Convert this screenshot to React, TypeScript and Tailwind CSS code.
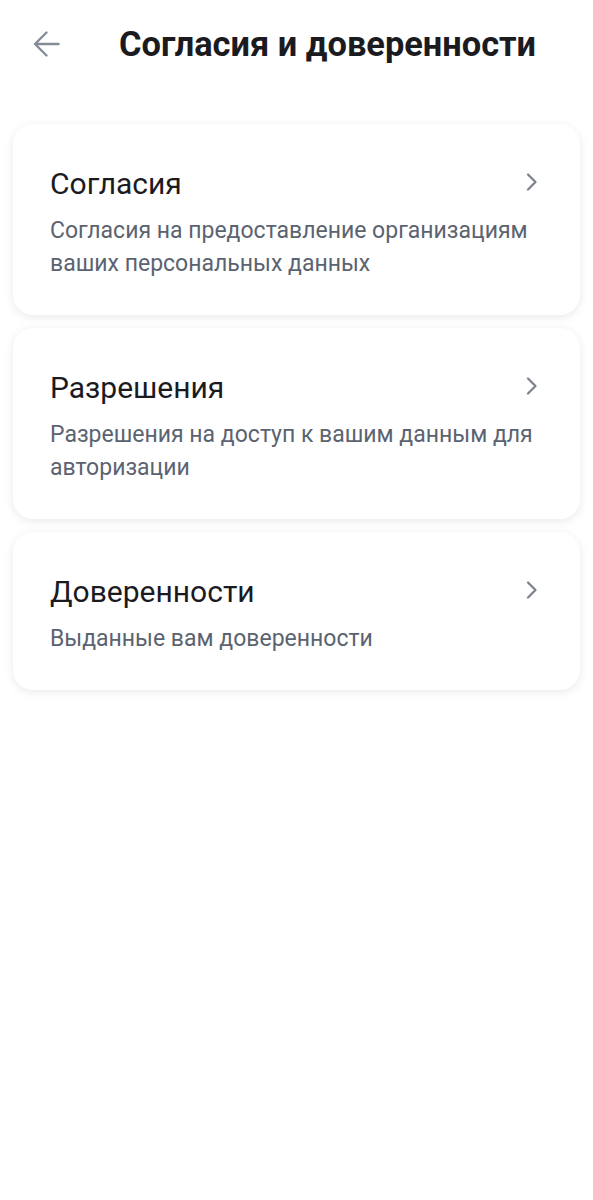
import React from "react";

const ITEMS = [
  {
    title: "Согласия",
    text: "Согласия на предоставление организациям ваших персональных данных",
  },
  {
    title: "Разрешения",
    text: "Разрешения на доступ к вашим данным для авторизации",
  },
  {
    title: "Доверенности",
    text: "Выданные вам доверенности",
  },
];

function Chevron() {
  return (
    <svg width="12" height="18" viewBox="0 0 12 18" fill="none" className="shrink-0">
      <path d="M2 1.5l7.5 7.5L2 16.5" stroke="#7b828d" strokeWidth="2.2" strokeLinecap="round" strokeLinejoin="round" />
    </svg>
  );
}

export default function App() {
  return (
    <div className="min-h-[1200px] bg-white font-['Roboto','Noto_Sans',sans-serif]">
      <header className="flex h-[88px] items-center pl-[33px]">
        <svg width="27" height="28" viewBox="0 0 27 28" fill="none" className="shrink-0">
          <path d="M25.5 14H2.5M13.5 2.5L2 14l11.5 11.5" stroke="#858c98" strokeWidth="2.4" strokeLinecap="round" strokeLinejoin="round" />
        </svg>
        <h1 className="ml-[59px] whitespace-nowrap text-[34.4px] leading-[40px] font-bold text-[#1b1b1f]">
          Согласия и доверенности
        </h1>
      </header>
      <div className="flex flex-col gap-[13px] px-[13px] pt-[36px]">
        {ITEMS.map((it) => (
          <div
            key={it.title}
            className="rounded-[20px] bg-white pb-[35px] pl-[37px] pr-[42px] pt-[42px] shadow-[0_2px_10px_rgba(0,0,0,0.09)]"
          >
            <div className="flex items-start justify-between">
              <div className="text-[30px] leading-[36px] text-[#1b1b1f]">{it.title}</div>
              <div className="pt-[7px]">
                <Chevron />
              </div>
            </div>
            <p className="mt-[12px] text-[23px] leading-[33px] text-[#5b6370]">{it.text}</p>
          </div>
        ))}
      </div>
    </div>
  );
}
